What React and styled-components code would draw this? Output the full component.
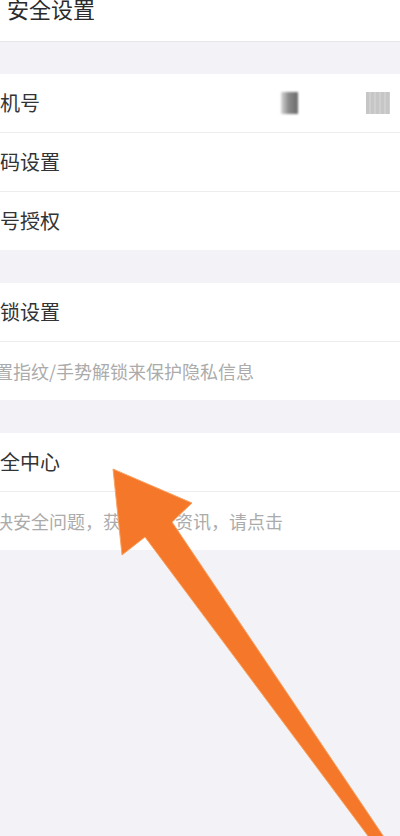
import React from 'react';
import styled, { createGlobalStyle } from 'styled-components';

const GlobalStyle = createGlobalStyle`
  html, body {
    margin: 0;
    padding: 0;
    background: #f3f3f7;
    overflow: hidden;
  }
  body {
    font-family: "Noto Sans CJK SC", "Noto Sans", sans-serif;
  }
`;

const Page = styled.div`
  position: relative;
  width: 400px;
  height: 836px;
  overflow: hidden;
  background: #f3f3f7;
`;

const Header = styled.div`
  height: 41px;
  background: #fff;
  border-bottom: 1px solid #e6e6eb;
  display: flex;
  align-items: flex-start;
  padding-left: 7px;
`;

const HeaderTitle = styled.span`
  font-size: 22px;
  line-height: 22px;
  margin-top: -3px;
  color: #2b2b2b;
  white-space: nowrap;
`;

const Group = styled.div`
  margin-top: ${({ $first }) => ($first ? '32px' : '33px')};
  background: #fff;
  display: flex;
  flex-direction: column;
`;

const Row = styled.div`
  height: 58px;
  display: flex;
  align-items: center;
  justify-content: space-between;
  overflow: hidden;
  & + & {
    border-top: 1px solid #ededf0;
  }
`;

const Title = styled.span`
  font-size: 20px;
  line-height: 24px;
  color: #333;
  white-space: nowrap;
  margin-left: ${({ $hidden }) => -20 * $hidden}px;
`;

const Hint = styled.span`
  font-size: 18px;
  line-height: 22px;
  color: #ababab;
  white-space: nowrap;
  margin-left: -23px;
`;

const Values = styled.div`
  display: flex;
  align-items: center;
  gap: 68px;
  margin-right: 10px;
`;

const Mask = styled.span`
  display: block;
  width: ${({ $w }) => $w}px;
  height: 22px;
  background: ${({ $dark }) =>
    $dark
      ? 'linear-gradient(90deg, #d8d8d8 0%, #8a8a8a 45%, #6a6a6a 100%)'
      : 'repeating-linear-gradient(90deg, #c6c6c6 0 3px, #cfcfcf 3px 5px)'};
  filter: blur(${({ $dark }) => ($dark ? '1.2px' : '0.6px')});
`;

const Arrow = styled.svg`
  position: absolute;
  top: 0;
  left: 0;
  pointer-events: none;
`;

const App = () => {
  return (
    <Page>
      <GlobalStyle />
      <Header>
        <HeaderTitle>安全设置</HeaderTitle>
      </Header>

      <Group $first>
        <Row>
          <Title $hidden={1}>手机号</Title>
          <Values>
            <Mask $dark $w={17} />
            <Mask $w={24} />
          </Values>
        </Row>
        <Row>
          <Title $hidden={1}>密码设置</Title>
        </Row>
        <Row>
          <Title $hidden={1}>账号授权</Title>
        </Row>
      </Group>

      <Group>
        <Row>
          <Title $hidden={2}>应用锁设置</Title>
        </Row>
        <Row>
          <Hint>设置指纹/手势解锁来保护隐私信息</Hint>
        </Row>
      </Group>

      <Group>
        <Row>
          <Title $hidden={1}>安全中心</Title>
        </Row>
        <Row>
          <Hint>解决安全问题，获取安全资讯，请点击</Hint>
        </Row>
      </Group>

      <Arrow width="400" height="836" viewBox="0 0 400 836">
        <polygon
          points="113,469 192,503 172,522 386,840 371,840 145,537 122,555"
          fill="#f5782a"
          stroke="#f8a263"
          strokeWidth="1"
          strokeLinejoin="round"
        />
      </Arrow>
    </Page>
  );
};

export default App;
